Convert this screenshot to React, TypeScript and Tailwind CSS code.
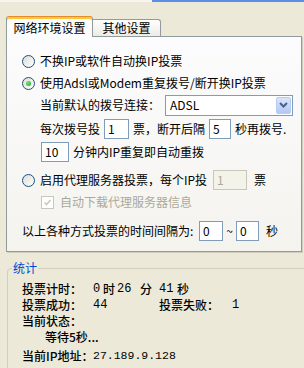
import React from 'react';

const Radio = ({ checked = false }: { checked?: boolean }) => (
  <span className="flex h-[13px] w-[13px] shrink-0 items-center justify-center rounded-full border border-[#1C5180] bg-linear-to-br from-[#DCDCD7] to-white">
    {checked && (
      <span className="h-[5px] w-[5px] rounded-full bg-[radial-gradient(circle_at_35%_35%,#7BE07A,#21A121)]" />
    )}
  </span>
);

const Box = ({ value, className = '', disabled = false }: { value: string; className?: string; disabled?: boolean }) => (
  <span
    className={`flex h-[20px] shrink-0 items-center border pl-[3px] ${
      disabled ? 'border-[#C9C7BA] bg-[#F4F3EA] text-[#ACA899]' : 'border-[#7F9DB9] bg-white text-black'
    } ${className}`}
  >
    {value}
  </span>
);

const DisabledCheck = () => (
  <span className="flex h-[13px] w-[13px] shrink-0 items-center justify-center border border-[#CAC8BB] bg-white">
    <svg width="9" height="9" viewBox="0 0 9 9">
      <path d="M1.5 4.5l2 2 4-4.5" stroke="#CAC8BB" strokeWidth="1.6" fill="none" />
    </svg>
  </span>
);

const App: React.FC = () => {
  return (
    <div className="h-[368px] w-[304px] overflow-hidden whitespace-nowrap bg-[#ECE9D8] font-['Noto_Sans_CJK_SC',sans-serif] text-[12px] leading-[14px] text-black [text-spacing-trim:space-all]">
      {/* window edge */}
      <div className="flex h-[2px]">
        <div className="w-[152px] bg-[#F6F5F0]" />
        <div className="flex-1 bg-[#5C8EE6]" />
      </div>

      {/* Tabs */}
      <div className="mt-[14px] flex items-end pl-[6px]">
        <div className="relative z-10 -mb-px flex h-[21px] w-[87px] items-center justify-center rounded-t-[3px] border border-b-0 border-[#919B9C] border-t-[#E68B2C] bg-[#FCFCFE] pt-[2px] shadow-[inset_0_2px_0_#FFC83C]">
          网络环境设置
        </div>
        <div className="flex h-[17px] w-[68px] items-center justify-center rounded-tr-[3px] border border-b-0 border-l-0 border-[#919B9C] bg-linear-to-b from-white to-[#ECEBE6]">
          其他设置
        </div>
      </div>

      {/* Panel */}
      <div className="ml-[6px] w-[296px] border border-[#919B9C] bg-linear-to-b from-[#FCFCFE] to-[#F4F3EE] pb-[9px] pl-[15px] pt-[13px] shadow-[1px_1px_0_#D0CEBF]">
        <div className="flex h-[22px] items-center gap-[5px]">
          <Radio />
          <span>不换IP或软件自动换IP投票</span>
        </div>
        <div className="flex h-[22px] items-center gap-[5px]">
          <Radio checked />
          <span>使用Adsl或Modem重复拨号/断开换IP投票</span>
        </div>
        <div className="flex h-[22px] items-center pl-[18px]">
          <span className="w-[120px]">当前默认的拨号连接：</span>
          <div className="ml-[5px] flex h-[21px] w-[128px] items-center justify-between border border-[#7F9DB9] bg-white pl-[4px] pr-px">
            <span>ADSL</span>
            <span className="flex h-[17px] w-[15px] items-center justify-center rounded-[2px] border border-[#B9CBF3] bg-linear-to-b from-[#D9E5FD] to-[#B4C8F6]">
              <svg width="9" height="6" viewBox="0 0 9 6">
                <path d="M1 1l3.5 3.5L8 1" stroke="#4D6185" strokeWidth="2" fill="none" />
              </svg>
            </span>
          </div>
        </div>
        <div className="mt-[2px] flex h-[22px] items-center pl-[18px]">
          <span className="w-[60px]">每次拨号投</span>
          <Box value="1" className="ml-[4px] w-[25px]" />
          <span className="ml-[4px] w-[72px]">票，断开后隔</span>
          <Box value="5" className="ml-[4px] w-[22px]" />
          <span className="ml-[4px]">秒再拨号.</span>
        </div>
        <div className="mt-px flex h-[22px] items-center pl-[18px]">
          <Box value="10" className="ml-px w-[28px]" />
          <span className="ml-[4px]">分钟内IP重复即自动重拨</span>
        </div>
        <div className="mt-[6px] flex h-[22px] items-center gap-[5px]">
          <Radio />
          <span className="w-[168px]">启用代理服务器投票，每个IP投</span>
          <Box value="1" disabled className="w-[34px]" />
          <span className="ml-[2px]">票</span>
        </div>
        <div className="flex h-[22px] items-center gap-[6px] pl-[19px] text-[#ACA899]">
          <DisabledCheck />
          <span>自动下载代理服务器信息</span>
        </div>
        <div className="mt-[7px] flex h-[22px] items-center">
          <span className="w-[174px]">以上各种方式投票的时间间隔为:</span>
          <Box value="0" className="ml-[3px] w-[24px]" />
          <span className="w-[13px] text-center">~</span>
          <Box value="0" className="w-[23px]" />
          <span className="ml-[7px]">秒</span>
        </div>
      </div>

      {/* Statistics group */}
      <div className="relative ml-[7px] mt-[16px] w-[310px] rounded-[4px] border border-[#D0D0BF] pb-[20px]">
        <span className="absolute left-[4px] top-[-8px] bg-[#ECE9D8] px-px text-[#0046D5]">统计</span>
        <div className="pl-[14px] pt-[12px] font-medium">
          <div className="flex h-[16px] items-center">
            <span className="w-[71px] shrink-0">投票计时：</span>
            <span className="w-[10px] font-['Liberation_Mono',monospace]">0</span>
            <span className="w-[14px]">时</span>
            <span className="w-[23px] font-['Liberation_Mono',monospace]">26</span>
            <span className="w-[19px]">分</span>
            <span className="w-[18px] font-['Liberation_Mono',monospace]">41</span>
            <span>秒</span>
          </div>
          <div className="flex h-[16px] items-center">
            <span className="w-[71px] shrink-0">投票成功：</span>
            <span className="w-[66px] shrink-0 font-['Liberation_Mono',monospace]">44</span>
            <span className="w-[73px] shrink-0">投票失败：</span>
            <span className="font-['Liberation_Mono',monospace]">1</span>
          </div>
          <div className="flex h-[16px] items-center">
            <span>当前状态：</span>
          </div>
          <div className="flex h-[16px] items-center pl-[23px]">
            <span>等待5秒...</span>
          </div>
          <div className="mt-[3px] flex h-[16px] items-center">
            <span className="w-[71px] shrink-0">当前IP地址：</span>
            <span className="font-['Liberation_Mono',monospace] text-[11.5px]">27.189.9.128</span>
          </div>
        </div>
      </div>
    </div>
  );
};

export default App;
